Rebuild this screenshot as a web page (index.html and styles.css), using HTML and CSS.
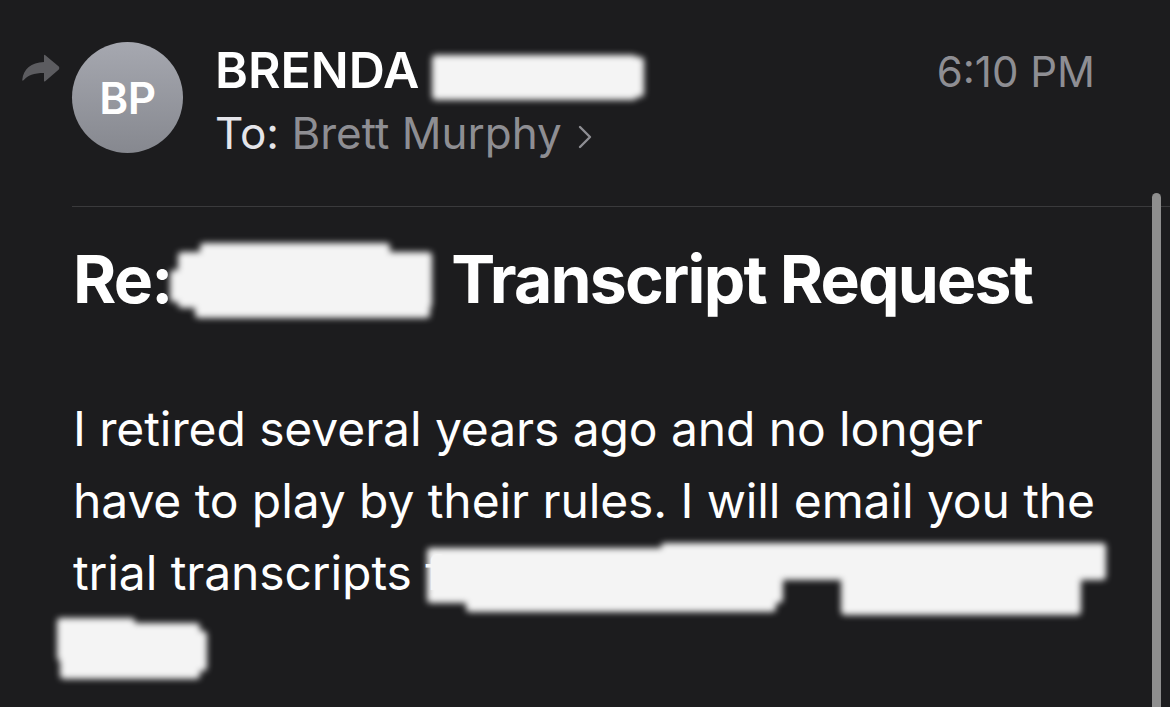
FILE: index.html
```html
<!DOCTYPE html>
<html lang="en">
    <head>
        <meta charset="UTF-8">
        <meta name="viewport" content="width=device-width, initial-scale=1.0">
        <title>Re: Transcript Request</title>
        <link rel="stylesheet" href="styles.css">
    </head>
    <body>
        <div class="mail">
            <div class="scrollbar"></div>

            <header class="head">
                <svg class="reply-icon" viewBox="0 0 38 32" width="38" height="32">
                    <path d="M23 2 L36.8 13.6 Q38 15 36.8 16.4 L23.2 28.2 Q22 29.2 22 27.6 L22 20 C12 20 5.5 22.5 1.8 27 Q0 28.5 0.3 26.5 C1.5 16 9 9.5 22 9 L22 3 Q22 1 23 2 Z" />
                </svg>
                <div class="avatar">BP</div>
                <div class="meta">
                    <div class="from">BRENDA <span class="redact redact-name"><span class="piece" style="left:0;top:-33px;width:205px;height:45px"></span><span class="piece" style="left:150px;top:-31px;width:62px;height:40px"></span></span></div>
                    <div class="to">To: <span class="recipient">Brett Murphy</span>
                        <svg class="chevron" viewBox="0 0 14 24" width="14" height="24">
                            <polyline points="2,2 12,12 2,22" />
                        </svg>
                    </div>
                </div>
                <div class="time">6:10 PM</div>
            </header>
            <div class="divider"></div>

            <div class="content">
                <h1 class="subject">Re:<span class="redact redact-subject"><span class="piece" style="left:8px;top:-51px;width:254px;height:56px"></span><span class="piece" style="left:30px;top:-60px;width:190px;height:14px"></span><span class="piece" style="left:25px;top:-4px;width:235px;height:19px"></span><span class="piece" style="left:0;top:-33px;width:16px;height:32px"></span></span> Transcript Request</h1>
                <p class="message">
                    I retired several years ago and no longer<br>
                    have to play by their rules. I will email you the<br>
                    trial transcripts f<span class="redact redact-line"><span class="piece" style="left:2px;top:-42px;width:356px;height:55px"></span><span class="piece" style="left:236px;top:-47px;width:445px;height:37px"></span><span class="piece" style="left:416px;top:-27px;width:240px;height:52px"></span><span class="piece" style="left:41px;top:-10px;width:310px;height:32px"></span><span class="piece" style="left:616px;top:-42px;width:65px;height:27px"></span></span><br>
                    <span class="redact redact-tail"><span class="piece" style="left:3px;top:-39px;width:140px;height:56px"></span><span class="piece" style="left:0;top:-44px;width:78px;height:43px"></span><span class="piece" style="left:73px;top:-31px;width:77px;height:40px"></span></span>
                </p>
            </div>
        </div>
    </body>
</html>
```

FILE: styles.css
```css
* {
    box-sizing: border-box;
}

body {
    margin: 0;
    background: #1c1c1e;
    color: #fff;
    font-family: Inter, "Noto Sans", sans-serif;
}

.mail {
    position: relative;
    height: 707px;
    overflow: hidden;
}

/* header: reply mark, avatar, sender, time */
.head {
    display: flex;
    align-items: flex-start;
    height: 206px;
    padding: 42px 75px 0 22px;
}

.reply-icon {
    flex: none;
    margin-top: 11px;
    fill: #5c5c60;
}

.avatar {
    flex: none;
    width: 111px;
    height: 111px;
    margin-left: 12px;
    border-radius: 50%;
    background: linear-gradient(#a6a8b0, #86888f);
    display: flex;
    align-items: center;
    justify-content: center;
    font-size: 44px;
    font-weight: 600;
    letter-spacing: -0.5px;
}

.meta {
    margin-left: 32px;
    margin-top: -2px;
}

.from {
    font-size: 50px;
    font-weight: 600;
    line-height: 60px;
    white-space: nowrap;
}

.to {
    margin-top: 5px;
    font-size: 44px;
    line-height: 56px;
    color: #e5e5ea;
    white-space: nowrap;
}

.recipient {
    color: #8e8e93;
}

.chevron {
    margin-left: 4px;
    fill: none;
    stroke: #8e8e93;
    stroke-width: 2.4;
    stroke-linecap: round;
    stroke-linejoin: round;
}

.time {
    margin-left: auto;
    margin-top: 4px;
    font-size: 42px;
    line-height: 52px;
    color: #8e8e93;
}

.divider {
    height: 1px;
    margin-left: 72px;
    background: #3a3a3c;
}

.content {
    padding-left: 73px;
}

.subject {
    margin: 32px 0 0;
    font-size: 66px;
    font-weight: 700;
    line-height: 80px;
    letter-spacing: -1.8px;
}

.message {
    margin: 74px 0 0;
    font-size: 48px;
    line-height: 72px;
    letter-spacing: -0.1px;
}

/* scribbled-out text */
.redact {
    position: relative;
    display: inline-block;
    height: 0;
    filter: blur(3px);
}

.redact .piece {
    position: absolute;
    background: #f4f4f4;
    border-radius: 4px;
}

.redact-name {
    width: 212px;
}

.redact-subject {
    width: 262px;
    margin-left: -2px;
    margin-right: 6px;
}

.redact-line {
    width: 681px;
    margin-left: -18px;
}

.redact-tail {
    width: 150px;
    margin-left: -16px;
}

.scrollbar {
    position: absolute;
    top: 193px;
    bottom: 0;
    left: 1152px;
    width: 9px;
    border-radius: 5px 5px 0 0;
    background: #8e8e8e;
}
```
